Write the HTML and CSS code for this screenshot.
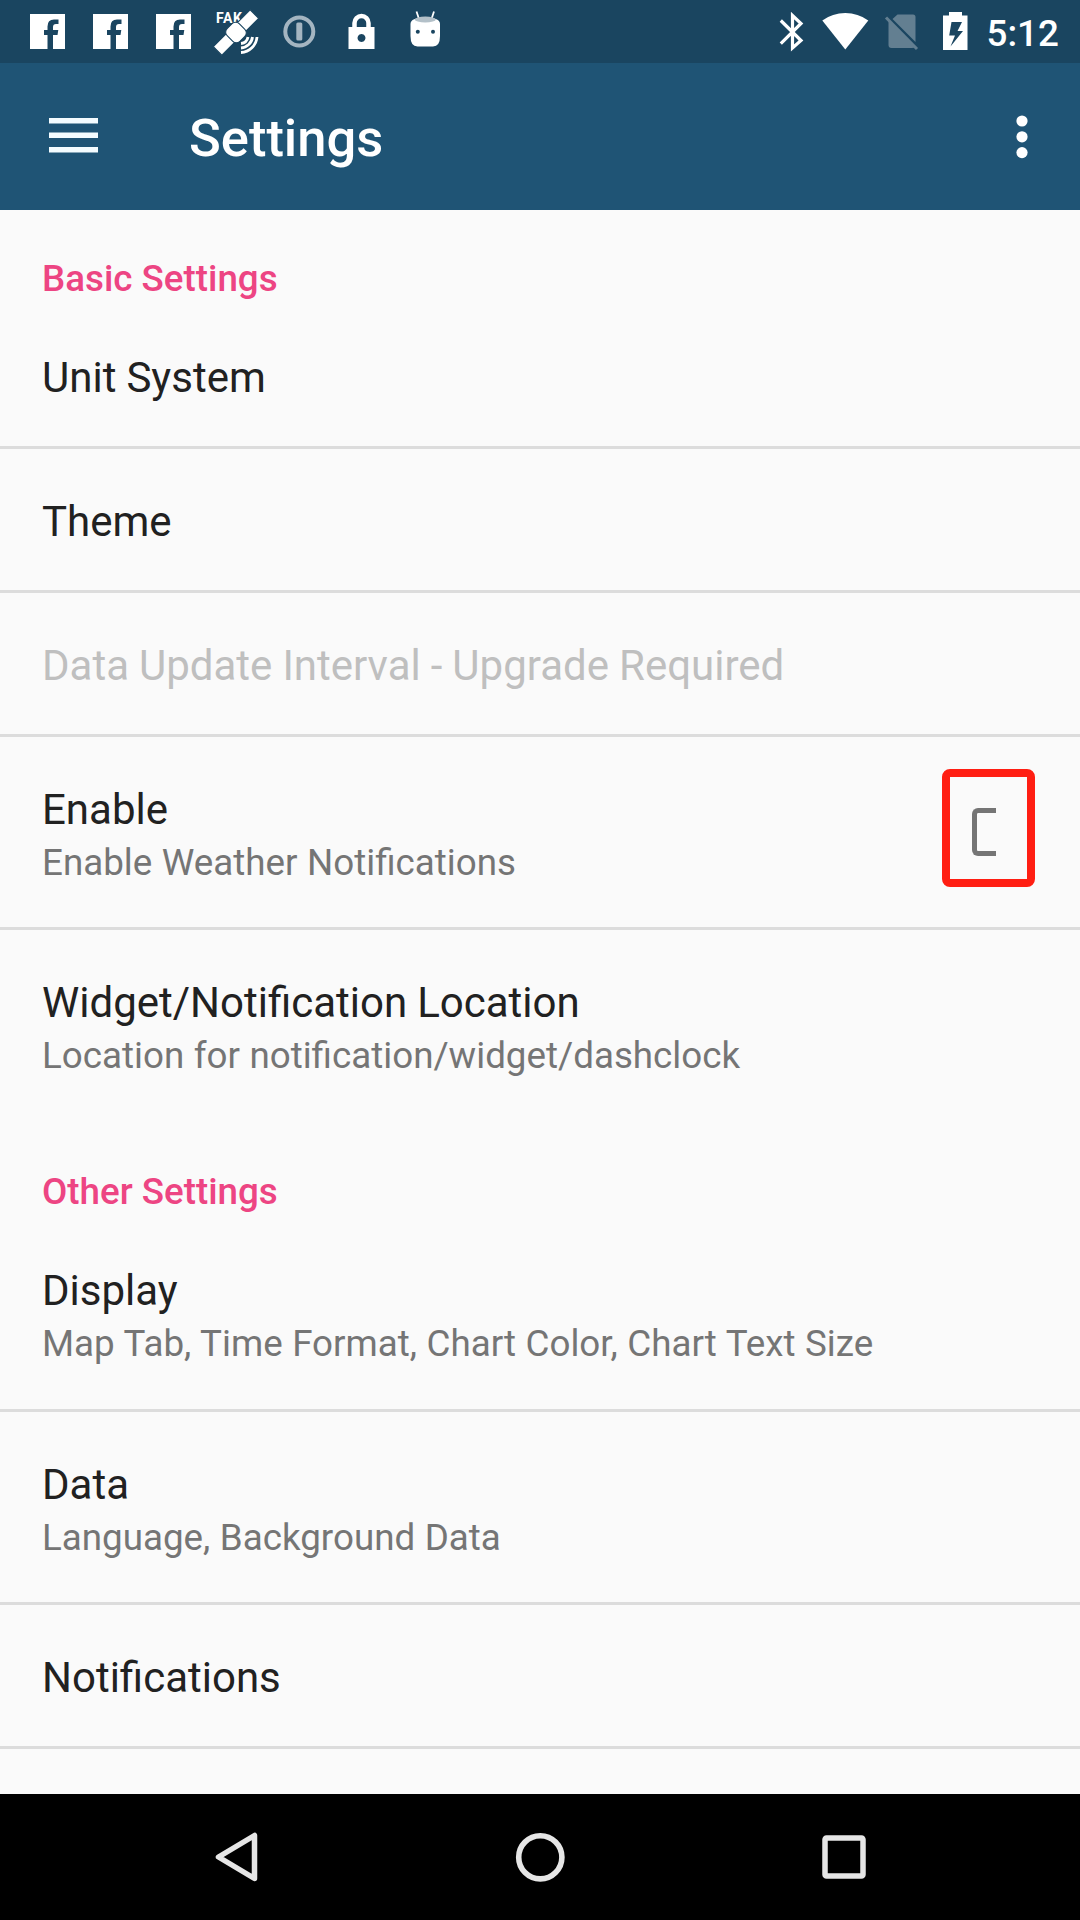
FILE: index.html
```html
<!DOCTYPE html>
<html lang="en">
<head>
<meta charset="utf-8">
<title>Settings</title>
<link rel="stylesheet" href="styles.css">
</head>
<body>
<div class="screen">
  <header class="status-bar">
    <div class="status-group">
      <svg class="slot" viewBox="16 0 63 63"><path fill="#fff" d="M30 14h35v35H53V35h4.500l.8-5H53v-3q0-3 3-3h2.500v-4.500H54q-6.500 0-6.500 7V30H44v5h3.500v14H30z"/></svg>
      <svg class="slot" viewBox="16 0 63 63"><path fill="#fff" d="M30 14h35v35H53V35h4.500l.8-5H53v-3q0-3 3-3h2.500v-4.500H54q-6.500 0-6.500 7V30H44v5h3.500v14H30z"/></svg>
      <svg class="slot" viewBox="16 0 63 63"><path fill="#fff" d="M30 14h35v35H53V35h4.500l.8-5H53v-3q0-3 3-3h2.500v-4.500H54q-6.500 0-6.500 7V30H44v5h3.500v14H30z"/></svg>
      <svg class="slot" viewBox="205 0 63 63">
        <text class="fake-label" x="216" y="23">FAK</text>
        <g transform="translate(236 32.500) rotate(-45)">
          <path class="sat-edge" d="M-26-6h18v12h-18zM8-6h18v12H8z"/>
          <rect class="sat-edge" x="-8.500" y="-9" width="17" height="18" rx="5"/>
        </g>
        <g fill="none" stroke="#fff" stroke-width="2.800"><path d="M241 43.500a8 8 0 0 0 7-6.500"/><path d="M241 48a12.500 12.500 0 0 0 11.500-11"/><path d="M241 52.500a17 17 0 0 0 16-15.500"/></g>
      </svg>
      <svg class="slot" viewBox="268 0 63 63"><circle cx="299.300" cy="31.500" r="14" fill="none" stroke="#a4b5c1" stroke-width="4"/><rect x="296.300" y="22.500" width="6" height="18" rx="1.500" fill="#a4b5c1"/></svg>
      <svg class="slot" viewBox="331 0 63 63"><path d="M354.500 29v-6a7 7 0 0 1 14 0v6" fill="none" stroke="#fff" stroke-width="4.500"/><path fill="#fff" fill-rule="evenodd" d="M348.500 27h26v22h-26zM361.500 34a4 4 0 1 0 .01 0z"/></svg>
      <svg class="slot" viewBox="394 0 63 63"><path d="M419 19l-2.500-7.500M431.500 19l2.500-7.500" stroke="#fff" stroke-width="1.800"/><path fill="#fff" d="M410.500 24q0-6.500 14.800-6.500T440 24v12q0 10.500-7 10.500h-15.500q-7 0-7-10.500z"/><ellipse cx="425.300" cy="19.500" rx="10.500" ry="3" fill="#b3c0c8"/><circle cx="417.800" cy="31.700" r="2" fill="#1a4560"/><circle cx="433" cy="31.700" r="2" fill="#1a4560"/></svg>
    </div>
    <div class="status-group">
      <svg width="43" height="63" viewBox="772 0 43 63"><path fill="none" stroke="#fff" stroke-width="3.200" d="M780.800 20.500L801 40.500l-8.500 7.500V15.500L801 23.500l-20.200 20.200"/></svg>
      <svg width="62" height="63" viewBox="815 0 62 63"><path fill="#fff" d="M822.300 20.500Q832.500 13 845.300 13t23 7.500L845.300 49.500z"/></svg>
      <svg width="50" height="63" viewBox="877 0 50 63"><path fill="#637f91" d="M897.500 14.500H913q2.500 0 2.500 2.500v25L892.500 19zM888.500 20L915 47q-1 1-3 1H891.500q-3 0-3-3z"/><path d="M886 17.500l31 31.500" stroke="#637f91" stroke-width="3"/></svg>
      <svg width="54" height="63" viewBox="927 0 54 63"><path fill="#fff" fill-rule="evenodd" d="M949 12h13v3.500h5.500V50H943V15.500h6zM951.500 22l-2.300 13.500h5.800l-4.500 11 12.500-15.500h-5.500l4.500-9z"/></svg>
      <span class="clock">5:12</span>
    </div>
  </header>

  <div class="app-bar">
    <svg class="menu-icon" width="49" height="36" viewBox="0 0 49 36"><path fill="#f4fcff" d="M0 0h49v5.500H0zM0 14.500h49V20H0zM0 29h49v5.500H0z"/></svg>
    <h1 class="app-title">Settings</h1>
    <svg class="more-icon" width="12" height="44" viewBox="0 0 12 44"><g fill="#fff"><circle cx="6" cy="6" r="5.600"/><circle cx="6" cy="21.800" r="5.600"/><circle cx="6" cy="37.600" r="5.600"/></g></svg>
  </div>

  <main class="settings">
    <h2 class="section-title">Basic Settings</h2>
    <div class="row"><div class="title">Unit System</div></div>
    <div class="row"><div class="title">Theme</div></div>
    <div class="row disabled"><div class="title">Data Update Interval - Upgrade Required</div></div>
    <div class="row">
      <div class="title">Enable</div>
      <div class="summary">Enable Weather Notifications</div>
      <div class="highlight"><span class="checkbox"></span></div>
    </div>
    <div class="row last">
      <div class="title">Widget/Notification Location</div>
      <div class="summary">Location for notification/widget/dashclock</div>
    </div>
    <h2 class="section-title">Other Settings</h2>
    <div class="row">
      <div class="title">Display</div>
      <div class="summary">Map Tab, Time Format, Chart Color, Chart Text Size</div>
    </div>
    <div class="row">
      <div class="title">Data</div>
      <div class="summary">Language, Background Data</div>
    </div>
    <div class="row"><div class="title">Notifications</div></div>
  </main>

  <nav class="nav-bar">
    <svg width="60" height="60" viewBox="-30 -30 60 60"><path fill="none" stroke="#e6e6e6" stroke-width="5.500" stroke-linejoin="round" d="M-17.500 0L18.500-21.500v43z"/></svg>
    <svg width="60" height="60" viewBox="-30 -30 60 60"><circle cx=".3" cy=".3" r="21.600" fill="none" stroke="#e6e6e6" stroke-width="5.600"/></svg>
    <svg width="60" height="60" viewBox="-30 -30 60 60"><rect x="-19" y="-19" width="38" height="38" rx="1.500" fill="none" stroke="#e6e6e6" stroke-width="5.500"/></svg>
  </nav>
</div>
</body>
</html>
```
FILE: styles.css
```css
* { box-sizing: border-box; }
body { margin: 0; font-family: Roboto, sans-serif; }
.screen {
  width: 1080px;
  height: 1920px;
  display: flex;
  flex-direction: column;
  background: #fafafa;
  overflow: hidden;
}
.status-bar {
  height: 63px;
  flex: none;
  display: flex;
  justify-content: space-between;
  padding-left: 16px;
  background: #1a4560;
}
.status-group { display: flex; }
.slot { width: 63px; height: 63px; }
.fake-label { font: 700 14px Roboto, sans-serif; fill: #fff; letter-spacing: .6px; }
.sat-edge { fill: #fff; stroke: #1a4560; stroke-width: 1; }
.clock {
  width: 99px;
  padding-left: 5.500px;
  font-size: 36.750px;
  font-weight: 500;
  line-height: 67px;
  color: #fff;
}
.app-bar {
  height: 147px;
  flex: none;
  display: flex;
  align-items: center;
  padding: 0 52px 0 49px;
  background: #1f5475;
}
.menu-icon { margin-bottom: 1px; }
.app-title {
  margin: 3px auto 0 91px;
  font-size: 52.500px;
  font-weight: 500;
  line-height: 62px;
  color: #fff;
}
.settings { flex: 1; min-height: 0; }
.section-title {
  margin: 0;
  height: 95px;
  padding: 47px 42px 0;
  font-size: 36.750px;
  font-weight: 500;
  line-height: 43px;
  color: #ed4583;
}
.row {
  position: relative;
  padding: 48px 42px 44px;
  border-bottom: 3px solid #dcdcdc;
  color: #212121;
}
.row:has(.summary) { padding-bottom: 43.200px; }
.row.last { border-color: transparent; }
.title { font-size: 42px; line-height: 49px; word-spacing: -.4px; }
.summary {
  margin-top: 7px;
  font-size: 36.750px;
  line-height: 43px;
  word-spacing: .4px;
  color: #757575;
}
.disabled { color: #bfbfbf; }
.highlight {
  position: absolute;
  top: 32px;
  right: 45px;
  width: 93px;
  height: 118px;
  display: flex;
  padding: 31px 0 0 22px;
  border: 8px solid #ff1e12;
  border-radius: 8px;
}
.checkbox {
  width: 24px;
  height: 48px;
  border: 5.500px solid #757575;
  border-right: 0;
  border-radius: 6px 0 0 6px;
}
.nav-bar {
  height: 126px;
  flex: none;
  display: flex;
  align-items: center;
  justify-content: space-between;
  padding: 0 206px;
  background: #000;
}
```
